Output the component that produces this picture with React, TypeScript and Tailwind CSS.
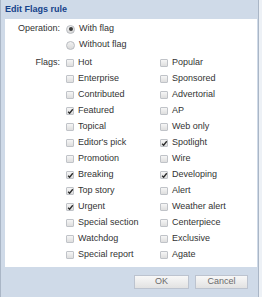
import React from "react";

const left = [
  { l: "Hot", c: false },
  { l: "Enterprise", c: false },
  { l: "Contributed", c: false },
  { l: "Featured", c: true },
  { l: "Topical", c: false },
  { l: "Editor's pick", c: false },
  { l: "Promotion", c: false },
  { l: "Breaking", c: true },
  { l: "Top story", c: true },
  { l: "Urgent", c: true },
  { l: "Special section", c: false },
  { l: "Watchdog", c: false },
  { l: "Special report", c: false },
];
const right = [
  { l: "Popular", c: false },
  { l: "Sponsored", c: false },
  { l: "Advertorial", c: false },
  { l: "AP", c: false },
  { l: "Web only", c: false },
  { l: "Spotlight", c: true },
  { l: "Wire", c: false },
  { l: "Developing", c: true },
  { l: "Alert", c: false },
  { l: "Weather alert", c: false },
  { l: "Centerpiece", c: false },
  { l: "Exclusive", c: false },
  { l: "Agate", c: false },
];

function Check({ checked }: { checked: boolean }) {
  return (
    <span className="relative w-[8px] h-[8px] border border-[#c0c3c8] rounded-[1px] bg-gradient-to-b from-[#f6f6f6] to-[#dedede] shrink-0">
      {checked && (
        <svg viewBox="0 0 8 8" className="absolute left-[0px] top-[0px] w-[7px] h-[7px]">
          <path d="M1.3 4.2 L3 5.9 L6.6 1.4" stroke="#2a2a2a" strokeWidth="1.5" fill="none" />
        </svg>
      )}
    </span>
  );
}

function Radio({ checked }: { checked: boolean }) {
  return (
    <span className="w-[9px] h-[9px] rounded-full border border-[#b8bbc0] bg-gradient-to-b from-[#f2f2f2] to-[#d8d8d8] flex items-center justify-center shrink-0">
      {checked && <span className="w-[4px] h-[4px] rounded-full bg-[#3a3a3a]" />}
    </span>
  );
}

function Item({ l, c }: { l: string; c: boolean }) {
  return (
    <div className="h-[16px] flex items-center gap-[4px] whitespace-nowrap">
      <Check checked={c} />
      <span>{l}</span>
    </div>
  );
}

export default function App() {
  return (
    <div
      className="w-[262px] h-[297px] bg-[#edf1f6] text-[9px] text-[#333] overflow-hidden"
      style={{ fontFamily: '"Liberation Sans", Arial, sans-serif' }}
    >
      <div className="w-[259px] h-[297px] bg-[#cfdae8] border-l border-r border-[#aab6c6] flex flex-col">
        <div className="h-[19px] pl-[4px] flex items-center font-bold text-[#15428b]">Edit Flags rule</div>
        <div className="ml-[4px] mr-[1px] bg-white h-[248px] pt-[2px]">
          <div className="flex">
            <div className="w-[56px] pr-[1px] h-[16px] flex items-center justify-end">Operation:</div>
            <div className="pl-[5px]">
              <div className="h-[16px] flex items-center gap-[4px]">
                <Radio checked />
                <span>With flag</span>
              </div>
              <div className="h-[16px] flex items-center gap-[4px]">
                <Radio checked={false} />
                <span>Without flag</span>
              </div>
            </div>
          </div>
          <div className="flex mt-[2px]">
            <div className="w-[56px] pr-[1px] h-[16px] flex items-center justify-end">Flags:</div>
            <div className="pl-[5px] w-[99px] shrink-0">
              {left.map((x) => (
                <Item key={x.l} l={x.l} c={x.c} />
              ))}
            </div>
            <div>
              {right.map((x) => (
                <Item key={x.l} l={x.l} c={x.c} />
              ))}
            </div>
          </div>
        </div>
        <div className="flex justify-end gap-[6px] pr-[10px] pt-[8px]">
          <button className="w-[55px] h-[14px] border border-[#bcc3cf] bg-gradient-to-b from-[#f8f8f8] to-[#e2e2e2] text-[#6a6a6a] text-[9px] flex items-center justify-center">
            OK
          </button>
          <button className="w-[53px] h-[14px] border border-[#bcc3cf] bg-gradient-to-b from-[#f8f8f8] to-[#e2e2e2] text-[#6a6a6a] text-[9px] flex items-center justify-center">
            Cancel
          </button>
        </div>
      </div>
    </div>
  );
}
